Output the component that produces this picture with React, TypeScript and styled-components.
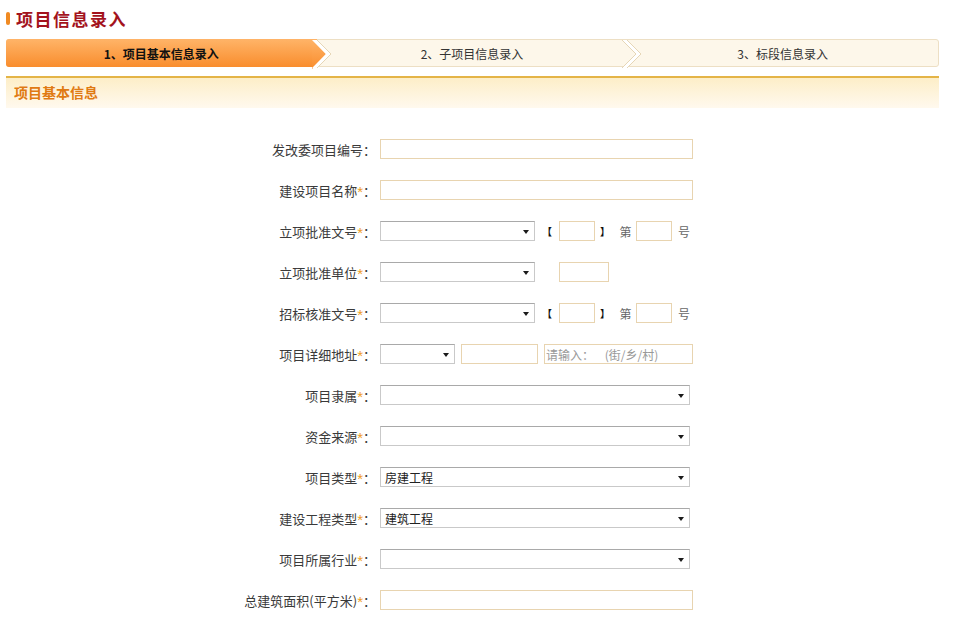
import React from "react";
import styled, { createGlobalStyle } from "styled-components";

const GlobalStyle = createGlobalStyle`
  html, body { margin: 0; padding: 0; background: #ffffff; }
  body { font-family: "Noto Sans CJK SC", "Liberation Sans", sans-serif; color: #333; }
  * { box-sizing: border-box; }
`;

const Page = styled.div`
  width: 960px;
  height: 620px;
  padding: 0 21px 0 6px;
  overflow: hidden;
`;

const TitleRow = styled.div`
  display: flex;
  align-items: center;
  height: 39px;
  padding-bottom: 2px;
`;

const TitleMark = styled.span`
  width: 4px;
  height: 13px;
  border-radius: 2px;
  background: #f08a22;
  margin-right: 6px;
`;

const Title = styled.h1`
  margin: 0;
  font-size: 17px;
  font-weight: 700;
  letter-spacing: 1.5px;
  color: #a3131d;
  line-height: 20px;
`;

const StepBar = styled.div`
  display: flex;
  height: 28px;
  border: 1px solid #eddfc4;
  border-radius: 3px;
  background: #fdf7ea;
`;

const Step = styled.div<{ $active?: boolean }>`
  position: relative;
  flex: 1;
  display: flex;
  align-items: center;
  justify-content: center;
  font-size: 12px;
  color: ${(p) => (p.$active ? "#111" : "#333")};
  font-weight: ${(p) => (p.$active ? 700 : 400)};
  margin: -1px 0;
  background: ${(p) =>
    p.$active ? "linear-gradient(#ffb468, #f98d2d)" : "transparent"};
  border-radius: ${(p) => (p.$active ? "3px 0 0 3px" : "0")};
  margin-left: ${(p) => (p.$active ? "-1px" : "0")};
  z-index: ${(p) => (p.$active ? 0 : 1)};
`;

const StepText = styled.span`
  position: relative;
  z-index: 2;
`;

const Chevron = styled.svg`
  position: absolute;
  left: -5px;
  top: 0;
  width: 20px;
  height: 30px;
`;

const Separator: React.FC<{ prevActive?: boolean }> = ({ prevActive }) => (
  <Chevron viewBox="0 0 20 30">
    <defs>
      <linearGradient id="orangeGrad" x1="0" y1="0" x2="0" y2="1">
        <stop offset="0" stopColor="#ffb468" />
        <stop offset="1" stopColor="#f98d2d" />
      </linearGradient>
    </defs>
    {prevActive && <polygon points="0,0 14,15 0,30" fill="url(#orangeGrad)" />}
    <polygon points="0,1 5,1 19,15 5,29 0,29 14,15" fill="#ffffff" />
    {!prevActive && (
      <polyline points="0,1 14,15 0,29" fill="none" stroke="#e6d6b6" strokeWidth="1" />
    )}
    <polyline points="5,1 19,15 5,29" fill="none" stroke="#e6d6b6" strokeWidth="1" />
  </Chevron>
);

const SectionHeader = styled.div`
  margin-top: 9px;
  height: 32px;
  border-top: 2px solid #e4b447;
  background: linear-gradient(#fdeec8, #fff9ee);
  display: flex;
  align-items: center;
  padding-left: 8px;
  padding-bottom: 2px;
`;

const SectionTitle = styled.h2`
  margin: 0;
  font-size: 14px;
  font-weight: 700;
  color: #e07a12;
`;

const Form = styled.div`
  margin-top: 31px;
  display: grid;
  grid-template-columns: 370px 1fr;
  column-gap: 4px;
  row-gap: 21px;
  grid-auto-rows: 20px;
`;

const Label = styled.div`
  display: flex;
  align-items: center;
  justify-content: flex-end;
  font-size: 13px;
  color: #3a3a3a;
  white-space: nowrap;
`;

const Star = styled.span`
  color: #ef9d26;
  font-family: "Liberation Sans", sans-serif;
  font-size: 15px;
  line-height: 13px;
  padding-top: 2px;
`;

const Controls = styled.div`
  display: flex;
  align-items: center;
`;

const TextInput = styled.div<{ $w: number; $ml?: number }>`
  width: ${(p) => p.$w}px;
  height: 20px;
  margin-left: ${(p) => p.$ml ?? 0}px;
  border: 1px solid #e8d4b0;
  background: #fff;
  font-size: 12px;
  color: #999;
  display: flex;
  align-items: center;
  padding-left: 1px;
  white-space: pre;
`;

const SelectBox = styled.div<{ $w: number }>`
  width: ${(p) => p.$w}px;
  height: 20px;
  border: 1px solid #c9c9c9;
  border-top-color: #a9a9a9;
  background: #fff;
  display: flex;
  align-items: center;
  justify-content: space-between;
  padding: 0 5px 0 4px;
  font-size: 12px;
  color: #222;
`;

const Arrow = styled.span`
  width: 0;
  height: 0;
  border-left: 3.5px solid transparent;
  border-right: 3.5px solid transparent;
  border-top: 4px solid #1a1a1a;
  margin-top: 2px;
`;

const Select: React.FC<{ w: number; value?: string }> = ({ w, value }) => (
  <SelectBox $w={w}>
    <span>{value ?? ""}</span>
    <Arrow />
  </SelectBox>
);

const Glyph = styled.span<{ $w: number; $bold?: boolean }>`
  width: ${(p) => p.$w}px;
  text-align: center;
  font-size: ${(p) => (p.$bold ? "10px" : "12px")};
  font-weight: ${(p) => (p.$bold ? 700 : 400)};
  color: ${(p) => (p.$bold ? "#111" : "#666")};
`;

const Field: React.FC<{ label: string; required?: boolean; children?: React.ReactNode }> = ({
  label,
  required,
  children,
}) => (
  <>
    <Label>
      {label}
      {required && <Star>*</Star>}：
    </Label>
    <Controls>{children}</Controls>
  </>
);

const DocNumber: React.FC = () => (
  <>
    <Select w={155} />
    <Glyph $w={24} $bold>【</Glyph>
    <TextInput $w={36} />
    <Glyph $w={20} $bold>】</Glyph>
    <Glyph $w={21}>第</Glyph>
    <TextInput $w={36} />
    <Glyph $w={24}>号</Glyph>
  </>
);

export default function App() {
  return (
    <Page>
      <GlobalStyle />
      <TitleRow>
        <TitleMark />
        <Title>项目信息录入</Title>
      </TitleRow>
      <StepBar>
        <Step $active>
          <StepText>1、项目基本信息录入</StepText>
        </Step>
        <Step>
          <Separator prevActive />
          <StepText>2、子项目信息录入</StepText>
        </Step>
        <Step>
          <Separator />
          <StepText>3、标段信息录入</StepText>
        </Step>
      </StepBar>
      <SectionHeader>
        <SectionTitle>项目基本信息</SectionTitle>
      </SectionHeader>
      <Form>
        <Field label="发改委项目编号">
          <TextInput $w={313} />
        </Field>
        <Field label="建设项目名称" required>
          <TextInput $w={313} />
        </Field>
        <Field label="立项批准文号" required>
          <DocNumber />
        </Field>
        <Field label="立项批准单位" required>
          <Select w={155} />
          <TextInput $w={50} $ml={24} />
        </Field>
        <Field label="招标核准文号" required>
          <DocNumber />
        </Field>
        <Field label="项目详细地址" required>
          <Select w={75} />
          <TextInput $w={77} $ml={6} />
          <TextInput $w={149} $ml={6}>{"请输入：    (街/乡/村)"}</TextInput>
        </Field>
        <Field label="项目隶属" required>
          <Select w={310} />
        </Field>
        <Field label="资金来源" required>
          <Select w={310} />
        </Field>
        <Field label="项目类型" required>
          <Select w={310} value="房建工程" />
        </Field>
        <Field label="建设工程类型" required>
          <Select w={310} value="建筑工程" />
        </Field>
        <Field label="项目所属行业" required>
          <Select w={310} />
        </Field>
        <Field label="总建筑面积(平方米)" required>
          <TextInput $w={313} />
        </Field>
      </Form>
    </Page>
  );
}
